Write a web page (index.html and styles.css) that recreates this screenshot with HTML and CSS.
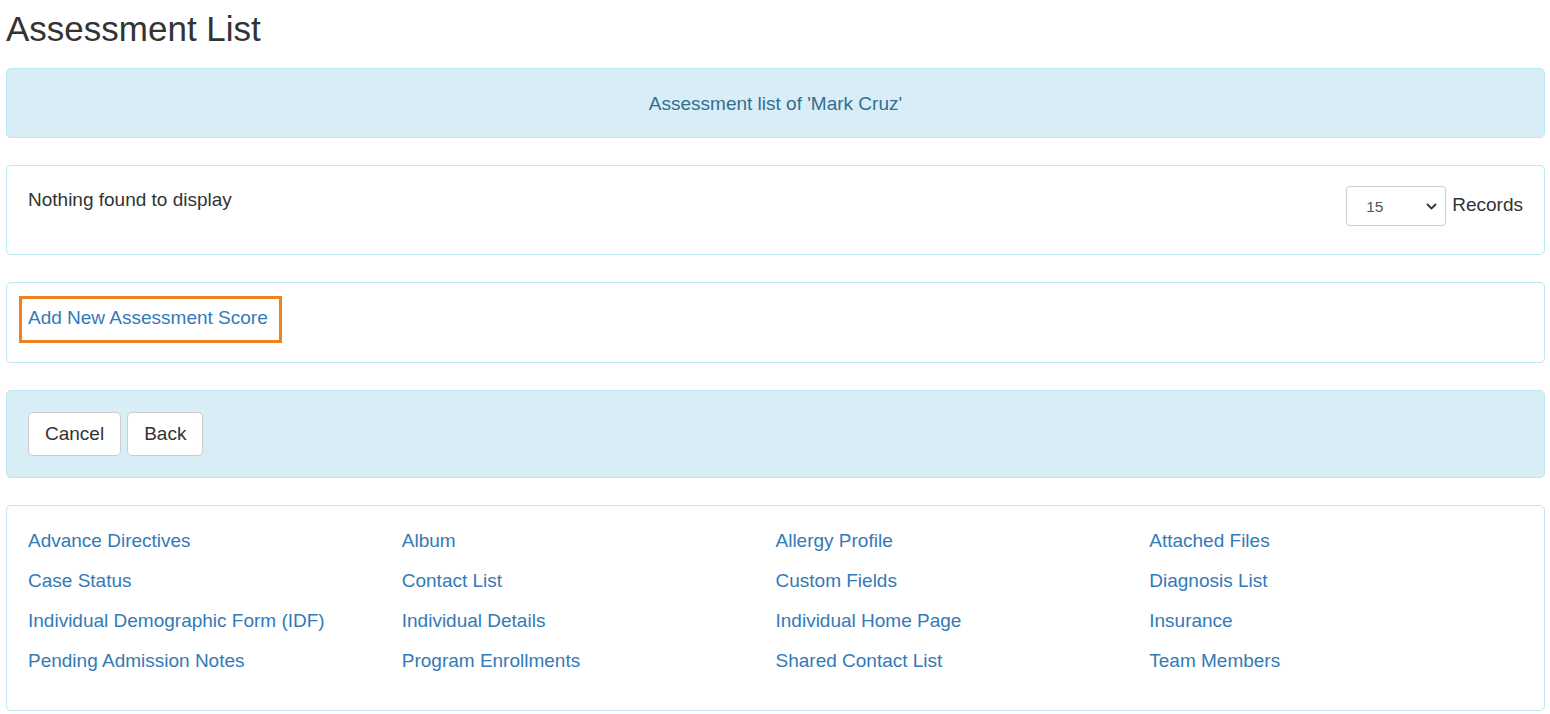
FILE: index.html
```html
<!DOCTYPE html>
<html>
<head>
  <title>Assessment List</title>
  <meta name="viewport" content="width=device-width, initial-scale=1.0">
  <link rel="stylesheet" href="styles.css">
</head>
<body>
  <div class="page">
    <h1 class="page-title">Assessment List</h1>

    <div class="panel panel-info panel-heading">Assessment list of 'Mark Cruz'</div>

    <div class="panel panel-results">
      <div class="empty-msg">Nothing found to display</div>
      <div class="records">
        <span class="select-wrap">
          <select class="page-size">
            <option>15</option>
            <option>25</option>
            <option>50</option>
          </select>
          <svg class="chevron" width="11" height="7" viewBox="0 0 11 7"><path d="M1 1l4.5 4.5L10 1" fill="none" stroke="#333" stroke-width="1.8"/></svg>
        </span>
        <span class="records-label">Records</span>
      </div>
    </div>

    <div class="panel panel-add">
      <a href="#" class="add-link">Add New Assessment Score</a>
    </div>

    <div class="panel panel-info panel-actions">
      <button class="btn">Cancel</button>
      <button class="btn">Back</button>
    </div>

    <div class="panel panel-links">
      <a href="#">Advance Directives</a>
      <a href="#">Album</a>
      <a href="#">Allergy Profile</a>
      <a href="#">Attached Files</a>
      <a href="#">Case Status</a>
      <a href="#">Contact List</a>
      <a href="#">Custom Fields</a>
      <a href="#">Diagnosis List</a>
      <a href="#">Individual Demographic Form (IDF)</a>
      <a href="#">Individual Details</a>
      <a href="#">Individual Home Page</a>
      <a href="#">Insurance</a>
      <a href="#">Pending Admission Notes</a>
      <a href="#">Program Enrollments</a>
      <a href="#">Shared Contact List</a>
      <a href="#">Team Members</a>
    </div>
  </div>
</body>
</html>
```

FILE: styles.css
```css
body {
  margin: 0;
  font-family: 'Liberation Sans', Arial, sans-serif;
  font-size: 19px;
  line-height: 27px;
  color: #333;
  background: #fff;
}
.page {
  padding: 0 5px 0 6px;
}
.page-title {
  font-size: 35px;
  font-weight: normal;
  line-height: 37px;
  margin: 10px 0 21px;
}
a {
  color: #337ab7;
  text-decoration: none;
}
a:hover {
  text-decoration: underline;
}
.panel {
  border: 1px solid #bce8f1;
  border-radius: 5px;
  background-color: #fff;
  margin-bottom: 27px;
}
.panel-info {
  background-color: #d9edf7;
}
.panel-heading {
  color: #31708f;
  text-align: center;
  padding: 20.5px 21px;
}
.panel-results {
  display: flex;
  justify-content: space-between;
  align-items: flex-start;
  padding: 20px 21px 28px;
}
.records {
  display: flex;
  align-items: flex-start;
}
.select-wrap {
  position: relative;
  display: inline-block;
}
.page-size {
  -webkit-appearance: none;
  appearance: none;
  width: 100px;
  height: 40px;
  padding: 0 0 0 19px;
  font-family: 'Liberation Sans', Arial, sans-serif;
  font-size: 15.5px;
  color: #555;
  background: #fff;
  border: 1px solid #ccc;
  border-radius: 4px;
}
.chevron {
  position: absolute;
  right: 9px;
  top: 17px;
  pointer-events: none;
}
.records-label {
  margin: 5px 0 0 6px;
}
.panel-add {
  padding: 13px 21px 19px 12px;
}
.add-link {
  display: inline-block;
  border: 3px solid #f0821e;
  padding: 5px 11px 9px 6px;
}
.panel-actions {
  display: flex;
  gap: 6px;
  padding: 21px;
}
.btn {
  font-family: 'Liberation Sans', Arial, sans-serif;
  font-size: 19px;
  line-height: 26px;
  color: #333;
  background: #fff;
  border: 1px solid #ccc;
  border-radius: 5px;
  padding: 8px 16px;
  height: 44px;
  cursor: pointer;
}
.btn:hover {
  background: #e6e6e6;
}
.panel-links {
  display: grid;
  grid-template-columns: repeat(4, 1fr);
  row-gap: 13.3px;
  padding: 20.5px 21px 35.5px;
}
```
